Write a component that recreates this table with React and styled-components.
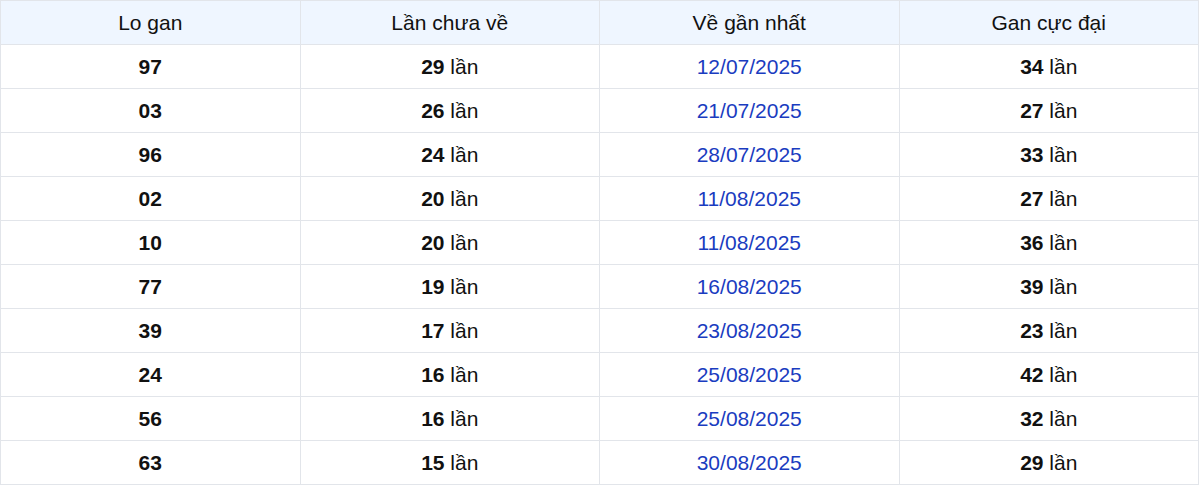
import React from 'react'
import styled, {createGlobalStyle} from 'styled-components'

const GlobalStyle = createGlobalStyle`
	body {
		margin: 0;
		background: #fff;
		font-family: 'Liberation Sans', Arial, sans-serif;
	}
`

const Table = styled.table`
	width: 1199px;
	border-collapse: collapse;
	table-layout: fixed;
	font-size: 21px;
	color: #111;
`
const HeadCell = styled.th`
	height: 43px;
	padding: 0;
	font-weight: 400;
	text-align: center;
	background: #eff6ff;
	border: 1px solid #e2e5ea;
`
const Cell = styled.td`
	height: 43px;
	padding: 0;
	text-align: center;
	border: 1px solid #e2e5ea;
	color: ${props => (props.blue ? '#1a3cc0' : '#111')};
	font-weight: ${props => (props.bold ? 700 : 400)};
`

const rows = [
	['97', 29, '12/07/2025', 34],
	['03', 26, '21/07/2025', 27],
	['96', 24, '28/07/2025', 33],
	['02', 20, '11/08/2025', 27],
	['10', 20, '11/08/2025', 36],
	['77', 19, '16/08/2025', 39],
	['39', 17, '23/08/2025', 23],
	['24', 16, '25/08/2025', 42],
	['56', 16, '25/08/2025', 32],
	['63', 15, '30/08/2025', 29]
]

const Count = ({n}) => (
	<>
		<b>{n}</b> lần
	</>
)

const App = () => (
	<>
		<GlobalStyle />
		<Table>
			<thead>
				<tr>
					<HeadCell>Lo gan</HeadCell>
					<HeadCell>Lần chưa về</HeadCell>
					<HeadCell>Về gần nhất</HeadCell>
					<HeadCell>Gan cực đại</HeadCell>
				</tr>
			</thead>
			<tbody>
				{rows.map(([lo, miss, date, max]) => (
					<tr key={lo + date}>
						<Cell bold>{lo}</Cell>
						<Cell><Count n={miss} /></Cell>
						<Cell blue>{date}</Cell>
						<Cell><Count n={max} /></Cell>
					</tr>
				))}
			</tbody>
		</Table>
	</>
)

export default App
